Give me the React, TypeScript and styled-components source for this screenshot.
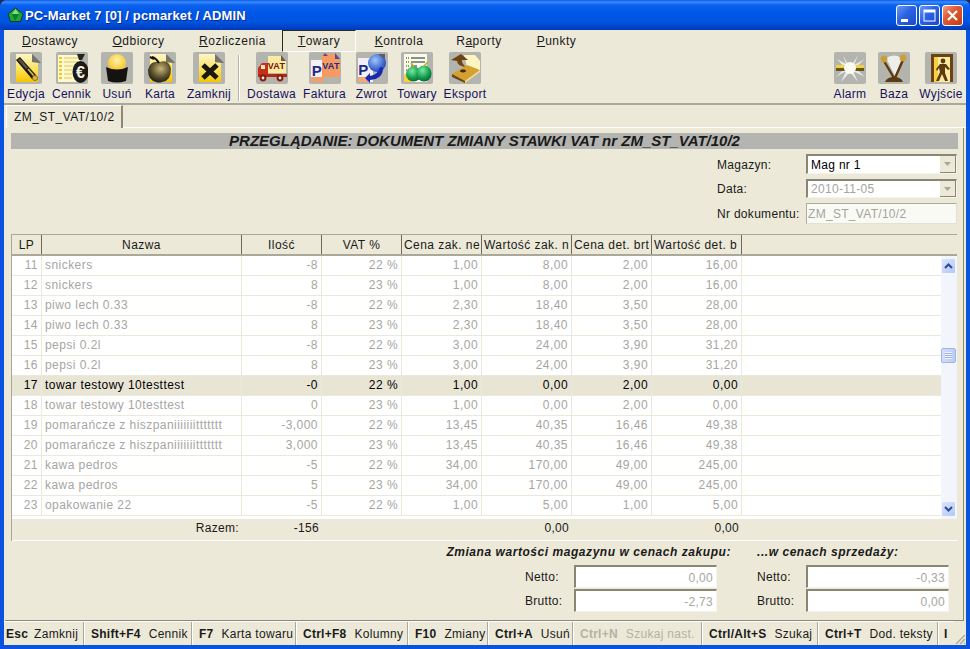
import React from "react";
import styled, { createGlobalStyle } from "styled-components";

const GlobalStyle = createGlobalStyle`
  html, body {
    margin: 0;
    padding: 0;
    background: #1d2c52;
    overflow: hidden;
  }
`;

// --- ICONS ---

const PageFold = () => (
  <>
    <path d="M22 2 L31 11 L22 10 Z" fill="#55524c" />
    <path d="M22 2 L22 10 L31 11 Z" fill="#8a8a84" opacity="0.6" />
  </>
);

const YellowPage = ({ id }: { id: string }) => (
  <>
    <defs>
      <linearGradient id={id} x1="0" y1="0" x2="0" y2="1">
        <stop offset="0" stopColor="#fdf6c8" />
        <stop offset="0.55" stopColor="#fbe25e" />
        <stop offset="1" stopColor="#f6c400" />
      </linearGradient>
    </defs>
    <path d="M6 2 H22 L28 9 V30 H6 Z" fill={`url(#${id})`} />
    <PageFold />
  </>
);

const EditIcon = () => (
  <svg width="32" height="32" viewBox="0 0 32 32">
    <YellowPage id="pageEdit" />
    <path d="M6 8 L10 5 L26 23 L22 27 Z" fill="#1b1a16" />
    <path d="M8 8 L10 6.5 L18 15.5 L16 17 Z" fill="#5a5648" />
    <path d="M18 17 L24 24" stroke="#d8b240" strokeWidth="1.8" />
    <circle cx="25" cy="26" r="2.6" fill="#d9b24a" stroke="#5a4a18" strokeWidth="0.6" />
  </svg>
);

const PriceIcon = () => (
  <svg width="32" height="32" viewBox="0 0 32 32">
    <rect x="2" y="3" width="22" height="27" fill="#fdf8d0" />
    <path d="M3 6 H6 M3 10 H6 M3 14 H6 M3 18 H6 M3 22 H6 M3 26 H6" stroke="#f2c81e" strokeWidth="2" />
    <path d="M8 6 H22 M8 10 H22 M8 14 H18 M8 18 H16 M8 22 H16 M8 26 H16" stroke="#e9d777" strokeWidth="1.5" />
    <path d="M21 2 L29 2 L26 8 L23 8 Z" fill="#26241e" />
    <ellipse cx="24.5" cy="20" rx="8" ry="11" fill="#1b1a16" />
    <text x="24.5" y="26" fontSize="16" fontWeight="700" textAnchor="middle" fill="#f3f0e6" fontFamily="Liberation Sans, sans-serif">€</text>
  </svg>
);

const BucketIcon = () => (
  <svg width="32" height="32" viewBox="0 0 32 32">
    <defs>
      <radialGradient id="bucketFill" cx="0.5" cy="0.35" r="0.6">
        <stop offset="0" stopColor="#fff3a6" />
        <stop offset="1" stopColor="#f4c326" />
      </radialGradient>
    </defs>
    <ellipse cx="16" cy="11" rx="9" ry="9" fill="url(#bucketFill)" />
    <path d="M5 15 Q16 20 27 15 L25 29 Q16 32 7 29 Z" fill="#141310" />
  </svg>
);

const AppleIcon = () => (
  <svg width="32" height="32" viewBox="0 0 32 32">
    <defs>
      <radialGradient id="appleBody" cx="0.55" cy="0.35" r="0.7">
        <stop offset="0" stopColor="#c9b67a" />
        <stop offset="0.55" stopColor="#5e5530" />
        <stop offset="1" stopColor="#16140c" />
      </radialGradient>
    </defs>
    <YellowPage id="pageApple" />
    <path d="M16 10 Q25 7 27 17 Q27 29 18 30 Q15 31 12 30 Q4 28 4 18 Q6 8 16 10 Z" fill="url(#appleBody)" />
    <path d="M15 11 Q12 6 8 5 M10 7 L6 5" stroke="#15140f" strokeWidth="2" fill="none" />
  </svg>
);

const CloseDocIcon = () => (
  <svg width="32" height="32" viewBox="0 0 32 32">
    <YellowPage id="pageClose" />
    <path d="M10 13 L24 26 M24 13 L10 26" stroke="#191812" strokeWidth="5" />
  </svg>
);

const TruckIcon = () => (
  <svg width="32" height="32" viewBox="0 0 32 32">
    <path d="M12 4 H25 L30 9 V21 H12 Z" fill="#fbeaa0" />
    <path d="M25 3 L30 9 H25 Z" fill="#6a5e50" />
    <text x="20.5" y="17" fontSize="9" fontWeight="700" textAnchor="middle" fill="#7a1408" fontFamily="Liberation Sans, sans-serif">VAT</text>
    <path d="M2 16 L6 11 H12 V24 H2 Z" fill="#c3301c" />
    <rect x="5" y="13" width="4" height="4" fill="#f6e6b8" />
    <rect x="2" y="22" width="29" height="3" fill="#b22a14" />
    <circle cx="7" cy="26" r="3.4" fill="#8a1c0c" />
    <circle cx="7" cy="26" r="1.4" fill="#f8f4e4" />
    <circle cx="24" cy="26" r="3.4" fill="#8a1c0c" />
    <circle cx="24" cy="26" r="1.4" fill="#f8f4e4" />
  </svg>
);

const InvoiceIcon = () => (
  <svg width="32" height="32" viewBox="0 0 32 32">
    <rect x="2" y="8" width="13" height="22" fill="#f4f0f4" />
    <rect x="2" y="25" width="13" height="5" fill="#f0a070" />
    <text x="8" y="24" fontSize="15" fontWeight="700" textAnchor="middle" fill="#1c2a88" fontFamily="Liberation Sans, sans-serif">P</text>
    <path d="M13 2 H26 L31 7 V25 H13 Z" fill="#f69a62" />
    <path d="M16 1 L19 4 H14 Z M26 1 L31 7 H26 Z" fill="#5a4a8a" />
    <text x="22" y="17" fontSize="9" fontWeight="700" textAnchor="middle" fill="#1c2a88" fontFamily="Liberation Sans, sans-serif">VAT</text>
  </svg>
);

const ReturnIcon = () => (
  <svg width="32" height="32" viewBox="0 0 32 32">
    <defs>
      <radialGradient id="globeFill" cx="0.4" cy="0.35" r="0.7">
        <stop offset="0" stopColor="#9cc8f8" />
        <stop offset="1" stopColor="#1a3cc0" />
      </radialGradient>
    </defs>
    <rect x="2" y="6" width="15" height="24" fill="#f2f0f6" />
    <rect x="2" y="25" width="10" height="5" fill="#f3a878" />
    <text x="7.5" y="23" fontSize="15" fontWeight="700" textAnchor="middle" fill="#1c2a88" fontFamily="Liberation Sans, sans-serif">P</text>
    <circle cx="21" cy="11" r="9" fill="url(#globeFill)" />
    <path d="M27 16 Q27 27 14 28 L14 31 L9 26 L14 21 L14 24 Q22 23 24 15 Z" fill="#1528b4" />
    <path d="M22 2 L29 2 L29 8 Z" fill="#5a5a70" />
  </svg>
);

const GoodsIcon = () => (
  <svg width="32" height="32" viewBox="0 0 32 32">
    <defs>
      <radialGradient id="greenApple" cx="0.4" cy="0.3" r="0.75">
        <stop offset="0" stopColor="#7de8a0" />
        <stop offset="0.6" stopColor="#14a050" />
        <stop offset="1" stopColor="#06602c" />
      </radialGradient>
    </defs>
    <rect x="3" y="2" width="23" height="28" fill="#fbf8ee" />
    <rect x="3" y="22" width="8" height="8" fill="#f6cf3c" />
    <path d="M5 6 H8 M5 10 H8 M5 14 H8 M5 18 H8" stroke="#8aa050" strokeWidth="2" strokeDasharray="1 1" />
    <path d="M10 6 H24 M10 10 H24 M10 14 H16" stroke="#607060" strokeWidth="1.6" />
    <ellipse cx="12.5" cy="22" rx="7.5" ry="7.5" fill="url(#greenApple)" />
    <ellipse cx="23" cy="21.5" rx="7.5" ry="8" fill="url(#greenApple)" />
    <path d="M23 14 L27 10 M13 15 L10 11" stroke="#b4b020" strokeWidth="1.6" />
  </svg>
);

const ExportIcon = () => (
  <svg width="32" height="32" viewBox="0 0 32 32">
    <path d="M15 3 H26 L31 9 V19 L18 15 Z" fill="#fdf4c4" />
    <path d="M12 2 L2 8 L8 9 Q8 14 17 15 Q12 11 13 8 L19 8 Z" fill="#6e4410" />
    <path d="M3 22 L18 13 L31 18 L16 29 Z" fill="#d4a030" />
    <path d="M3 22 L16 29 V31 L3 25 Z" fill="#6e4410" />
    <path d="M16 29 L31 18 V20 L16 31 Z" fill="#f4dc90" />
    <ellipse cx="14" cy="19" rx="3" ry="1.4" fill="#3c280a" />
  </svg>
);

const AlarmIcon = () => (
  <svg width="32" height="32" viewBox="0 0 32 32">
    <path d="M16 16 L24 3 L20 13 L31 7 L21 16 L31 25 L19 19 L24 30 L16 20 L7 30 L12 19 L2 25 L11 16 L3 7 L12 12 L9 3 Z" fill="#e8eaea" />
    <rect x="2" y="13" width="28" height="3" fill="#f0d24a" />
    <rect x="2" y="16" width="28" height="3" fill="#6a5414" />
    <circle cx="16" cy="16" r="6" fill="#fbfbf4" />
  </svg>
);

const LeverIcon = () => (
  <svg width="32" height="32" viewBox="0 0 32 32">
    <path d="M8 6 Q16 1 24 6 L17 24 Z" fill="#eeeeea" />
    <path d="M6 9 L16 26 M25 8 L17 26" stroke="#5e3a10" strokeWidth="2.4" />
    <circle cx="6" cy="7" r="3.4" fill="#c8a03a" />
    <circle cx="25" cy="6" r="3.4" fill="#c8a03a" />
    <path d="M7 30 Q9 25 16 25 Q23 25 25 30 Z" fill="#5e3a10" />
  </svg>
);

const ExitIcon = () => (
  <svg width="32" height="32" viewBox="0 0 32 32">
    <path d="M6 2 H28 V30 H25 V5 H9 V30 H6 Z" fill="#6b4216" />
    <rect x="9" y="5" width="16" height="25" fill="#fbeaa0" />
    <rect x="9" y="5" width="4" height="25" fill="#f6d040" />
    <circle cx="18" cy="9" r="2.4" fill="#5e3a10" />
    <path d="M15 12 H21 L25 17 L23 18 L20 15 L20 21 L23 29 H20 L17 22 L14 29 H11 L15 20 L14 16 L12 19 L11 17 Z" fill="#5e3a10" />
  </svg>
);

const AppLogo = () => (
  <svg width="17" height="16" viewBox="0 0 17 16">
    <path d="M8.5 1 L16 7 L13.5 14.5 H3.5 L1 7 Z" fill="#1fa63a" stroke="#0c3a18" strokeWidth="1" />
    <path d="M8.5 2 L5 7 H12 Z" fill="#7fe07a" />
    <path d="M5 7 L8 14 L12 7 Z" fill="#0f7a2c" />
  </svg>
);

const ArrowGlyph = () => (
  <svg width="7" height="4" viewBox="0 0 7 4">
    <path d="M0 0 H7 L3.5 4 Z" fill="#a8a498" />
  </svg>
);

// --- DATA ---

const COLS = [30, 200, 80, 80, 80, 90, 80, 90];

const HEADERS = [
  { text: "LP", align: "center" },
  { text: "Nazwa", align: "center" },
  { text: "Ilość", align: "center" },
  { text: "VAT %", align: "center" },
  { text: "Cena zak. ne", align: "left" },
  { text: "Wartość zak. n", align: "left" },
  { text: "Cena det. brt", align: "left" },
  { text: "Wartość det. b", align: "left" },
];

const ROWS = [
  ["11", "snickers", "-8", "22 %", "1,00", "8,00", "2,00", "16,00"],
  ["12", "snickers", "8", "23 %", "1,00", "8,00", "2,00", "16,00"],
  ["13", "piwo lech 0.33", "-8", "22 %", "2,30", "18,40", "3,50", "28,00"],
  ["14", "piwo lech 0.33", "8", "23 %", "2,30", "18,40", "3,50", "28,00"],
  ["15", "pepsi 0.2l", "-8", "22 %", "3,00", "24,00", "3,90", "31,20"],
  ["16", "pepsi 0.2l", "8", "23 %", "3,00", "24,00", "3,90", "31,20"],
  ["17", "towar testowy 10testtest", "-0", "22 %", "1,00", "0,00", "2,00", "0,00"],
  ["18", "towar testowy 10testtest", "0", "23 %", "1,00", "0,00", "2,00", "0,00"],
  ["19", "pomarańcze z hiszpaniiiiiiittttttt", "-3,000", "22 %", "13,45", "40,35", "16,46", "49,38"],
  ["20", "pomarańcze z hiszpaniiiiiiittttttt", "3,000", "23 %", "13,45", "40,35", "16,46", "49,38"],
  ["21", "kawa pedros", "-5", "22 %", "34,00", "170,00", "49,00", "245,00"],
  ["22", "kawa pedros", "5", "23 %", "34,00", "170,00", "49,00", "245,00"],
  ["23", "opakowanie 22", "-5", "22 %", "1,00", "5,00", "1,00", "5,00"],
];

const FOOTER = ["", "Razem:", "-156", "", "", "0,00", "", "0,00"];

const MENU = [
  { key: "D", rest: "ostawcy", width: 92 },
  { key: "O", rest: "dbiorcy", width: 85 },
  { key: "R", rest: "ozliczenia", width: 103 },
  { key: "T", rest: "owary", width: 72, active: true },
  { key: "K", rest: "ontrola", width: 86 },
  { pre: "R", key: "a", rest: "porty", width: 74 },
  { key: "P", rest: "unkty", width: 81 },
];

const TOOLS_LEFT = [
  { label: "Edycja", width: 40, icon: <EditIcon /> },
  { label: "Cennik", width: 51, icon: <PriceIcon /> },
  { label: "Usuń", width: 40, icon: <BucketIcon /> },
  { label: "Karta", width: 46, icon: <AppleIcon /> },
  { label: "Zamknij", width: 52, icon: <CloseDocIcon /> },
];

const TOOLS_MIDDLE = [
  { label: "Dostawa", width: 57, icon: <TruckIcon /> },
  { label: "Faktura", width: 49, icon: <InvoiceIcon /> },
  { label: "Zwrot", width: 45, icon: <ReturnIcon /> },
  { label: "Towary", width: 46, icon: <GoodsIcon /> },
  { label: "Eksport", width: 50, icon: <ExportIcon /> },
];

const TOOLS_RIGHT = [
  { label: "Alarm", width: 40, icon: <AlarmIcon /> },
  { label: "Baza", width: 48, icon: <LeverIcon /> },
  { label: "Wyjście", width: 46, icon: <ExitIcon /> },
];

const SHORTCUTS = [
  { key: "Esc", text: "Zamknij", width: 81 },
  { key: "Shift+F4", text: "Cennik", width: 108 },
  { key: "F7", text: "Karta towaru", width: 104 },
  { key: "Ctrl+F8", text: "Kolumny", width: 112 },
  { key: "F10", text: "Zmiany", width: 80 },
  { key: "Ctrl+A", text: "Usuń", width: 85 },
  { key: "Ctrl+N", text: "Szukaj nast.", width: 129, disabled: true },
  { key: "Ctrl/Alt+S", text: "Szukaj", width: 116 },
  { key: "Ctrl+T", text: "Dod. teksty", width: 120 },
];

// --- RENDER ---

const renderTool = (tool: { label: string; width: number; icon: React.ReactNode }) => (
  <ToolButton key={tool.label} $width={tool.width}>
    <IconTile>{tool.icon}</IconTile>
    <ToolLabel>{tool.label}</ToolLabel>
  </ToolButton>
);

const App = () => (
  <Window>
    <GlobalStyle />

    <TitleBar>
      <AppLogo />
      <TitleText>PC-Market 7 [0] / pcmarket / ADMIN</TitleText>
      <CaptionButtons>
        <CaptionButton>
          <svg width="21" height="21" viewBox="0 0 21 21">
            <rect x="5" y="14" width="7" height="3" fill="#fff" />
          </svg>
        </CaptionButton>
        <CaptionButton>
          <svg width="21" height="21" viewBox="0 0 21 21">
            <rect x="5" y="5" width="11" height="11" fill="none" stroke="#fff" strokeWidth="1" />
            <rect x="5" y="5" width="11" height="2.5" fill="#fff" />
          </svg>
        </CaptionButton>
        <CaptionButton $close>
          <svg width="21" height="21" viewBox="0 0 21 21">
            <path d="M6 6 L15 15 M15 6 L6 15" stroke="#fff" strokeWidth="2.2" />
          </svg>
        </CaptionButton>
      </CaptionButtons>
    </TitleBar>

    <Body>
      <MenuBar>
        {MENU.map(({ pre, key, rest, width, active }) => (
          <MenuTab key={rest} $width={width} $active={active}>
            {pre}
            <u>{key}</u>
            {rest}
          </MenuTab>
        ))}
      </MenuBar>

      <Toolbar>
        {TOOLS_LEFT.map(renderTool)}
        <ToolSeparator />
        {TOOLS_MIDDLE.map(renderTool)}
        <ToolSpacer />
        {TOOLS_RIGHT.map(renderTool)}
      </Toolbar>

      <TabStrip>
        <DocTab>ZM_ST_VAT/10/2</DocTab>
        <TabStripLine />
      </TabStrip>

      <Panel>
        <HeaderBar>PRZEGLĄDANIE: DOKUMENT ZMIANY STAWKI VAT nr ZM_ST_VAT/10/2</HeaderBar>

        <DocForm>
          <FormLabel>Magazyn:</FormLabel>
          <ComboBox>
            Mag nr 1
            <ComboArrow>
              <ArrowGlyph />
            </ComboArrow>
          </ComboBox>
          <FormLabel>Data:</FormLabel>
          <ComboBox $disabled>
            2010-11-05
            <ComboArrow>
              <ArrowGlyph />
            </ComboArrow>
          </ComboBox>
          <FormLabel>Nr dokumentu:</FormLabel>
          <TextBox>ZM_ST_VAT/10/2</TextBox>
        </DocForm>

        <Grid>
          <GridHead>
            {HEADERS.map(({ text, align }, i) => (
              <HeadCell key={text} $width={COLS[i]} $align={align}>
                {text}
              </HeadCell>
            ))}
          </GridHead>

          <GridBody>
            <GridRows>
              {ROWS.map((row) => (
                <GridRow key={row[0]} $current={row[0] === "17"}>
                  {row.map((value, i) => (
                    <GridCell key={i} $width={COLS[i]} $left={i === 1}>
                      {value}
                    </GridCell>
                  ))}
                </GridRow>
              ))}
            </GridRows>

            <ScrollBar>
              <ScrollButton>
                <svg width="9" height="6" viewBox="0 0 9 6">
                  <path d="M1 5 L4.5 1.5 L8 5" fill="none" stroke="#2a4a9a" strokeWidth="2" />
                </svg>
              </ScrollButton>
              <ScrollThumb />
              <ScrollButton>
                <svg width="9" height="6" viewBox="0 0 9 6">
                  <path d="M1 1 L4.5 4.5 L8 1" fill="none" stroke="#2a4a9a" strokeWidth="2" />
                </svg>
              </ScrollButton>
            </ScrollBar>
          </GridBody>

          <GridFooter>
            {FOOTER.map((value, i) => (
              <FooterCell key={i} $width={COLS[i]}>
                {value}
              </FooterCell>
            ))}
          </GridFooter>
        </Grid>

        <Summary>
          <SummaryGroup $width={286}>
            <SummaryTitle $right>Zmiana wartości magazynu w cenach zakupu:</SummaryTitle>
            <SummaryRow $indent={80}>
              <SummaryLabel>Netto:</SummaryLabel>
              <AmountBox>0,00</AmountBox>
            </SummaryRow>
            <SummaryRow $indent={80}>
              <SummaryLabel>Brutto:</SummaryLabel>
              <AmountBox>-2,73</AmountBox>
            </SummaryRow>
          </SummaryGroup>

          <SummaryGroup $width={192}>
            <SummaryTitle>...w cenach sprzedaży:</SummaryTitle>
            <SummaryRow>
              <SummaryLabel>Netto:</SummaryLabel>
              <AmountBox>-0,33</AmountBox>
            </SummaryRow>
            <SummaryRow>
              <SummaryLabel>Brutto:</SummaryLabel>
              <AmountBox>0,00</AmountBox>
            </SummaryRow>
          </SummaryGroup>
        </Summary>
      </Panel>

      <StatusBar>
        {SHORTCUTS.map(({ key, text, width, disabled }) => (
          <StatusCell key={key} $width={width} $disabled={disabled}>
            <b>{key}</b>
            {text}
          </StatusCell>
        ))}
        <StatusEnd>
          <b>I</b>
        </StatusEnd>
        <ResizeGrip>
          <svg width="12" height="12" viewBox="0 0 12 12">
            <path d="M11 2 L2 11 M11 6 L6 11 M11 10 L10 11" stroke="#aca899" strokeWidth="1.4" />
          </svg>
        </ResizeGrip>
      </StatusBar>
    </Body>
  </Window>
);

export default App;

const Window = styled.div`
  background: #0a52e0;
  border-radius: 7px 7px 0 0;
  box-sizing: border-box;
  color: #1a1a1a;
  display: flex;
  flex-direction: column;
  font-family: "Liberation Sans", Arial, sans-serif;
  font-size: 12px;
  height: 649px;
  letter-spacing: 0.3px;
  overflow: hidden;
  width: 970px;
`;

const TitleBar = styled.div`
  align-items: center;
  background: linear-gradient(
    180deg,
    #0a58e8 0,
    #3a8cff 2px,
    #0c62f0 5px,
    #0058e8 12px,
    #0054e0 22px,
    #0040c4 28px,
    #0038b4 30px
  );
  display: flex;
  flex: none;
  height: 30px;
  padding: 0 7px 0 7px;
`;

const TitleText = styled.div`
  color: #fff;
  font-size: 13px;
  font-weight: 700;
  letter-spacing: 0.13px;
  margin-left: 1px;
  text-shadow: 1px 1px 0 #0a2a90;
  white-space: nowrap;
`;

const CaptionButtons = styled.div`
  display: flex;
  gap: 2px;
  margin-left: auto;
`;

const CaptionButton = styled.div<{ $close?: boolean }>`
  background: ${({ $close }) =>
    $close
      ? "linear-gradient(135deg, #f0a088 0, #e05a32 40%, #c43c14 100%)"
      : "linear-gradient(135deg, #6c98f4 0, #2a62e4 45%, #1c48cc 100%)"};
  border: 1px solid #fff;
  border-radius: 3px;
  box-sizing: border-box;
  display: flex;
  height: 21px;
  overflow: hidden;
  width: 21px;

  svg {
    flex: none;
    margin: -1px;
  }
`;

const Body = styled.div`
  background: #ece9d8;
  display: flex;
  flex: 1;
  flex-direction: column;
  margin: 0 4px 4px;
  min-height: 0;
`;

const MenuBar = styled.div`
  display: flex;
  flex: none;
  height: 22px;
  letter-spacing: 0.5px;
`;

const MenuTab = styled.div<{ $width: number; $active?: boolean }>`
  align-items: center;
  border-bottom: 1px solid ${({ $active }) => ($active ? "#fff" : "transparent")};
  border-left: 1px solid ${({ $active }) => ($active ? "#2a2a24" : "transparent")};
  border-right: 1px solid ${({ $active }) => ($active ? "#fff" : "transparent")};
  border-top: 1px solid ${({ $active }) => ($active ? "#2a2a24" : "transparent")};
  box-sizing: border-box;
  display: flex;
  justify-content: center;
  margin-left: ${({ $active }) => ($active ? "-2px" : "0")};
  padding-bottom: 1px;
  width: ${({ $active, $width }) => ($active ? $width + 2 : $width)}px;
`;

const Toolbar = styled.div`
  align-items: flex-start;
  border-bottom: 2px solid #aca899;
  display: flex;
  flex: none;
  height: 51px;
  padding: 0 2px;
`;

const ToolButton = styled.div<{ $width: number }>`
  align-items: center;
  display: flex;
  flex: none;
  flex-direction: column;
  white-space: nowrap;
  width: ${({ $width }) => $width}px;
`;

const IconTile = styled.div`
  background: #b4b4ae;
  border-radius: 2px;
  display: flex;
  height: 32px;
  overflow: hidden;
  width: 32px;
`;

const ToolLabel = styled.div`
  color: #15105e;
  line-height: 14px;
  margin-top: 3px;
`;

const ToolSeparator = styled.div`
  background: #b8b4a2;
  border-right: 1px solid #fff;
  flex: none;
  height: 46px;
  margin: 3px 3px 0 3px;
  width: 1px;
`;

const ToolSpacer = styled.div`
  flex: 1;
`;

const TabStrip = styled.div`
  display: flex;
  flex: none;
  height: 23px;
`;

const DocTab = styled.div`
  align-items: center;
  border-left: 1px solid #fff;
  border-right: 2px solid #8c8874;
  border-top: 1px solid #fff;
  box-sizing: border-box;
  display: flex;
  letter-spacing: 0.45px;
  margin-left: 2px;
  padding-left: 7px;
  white-space: nowrap;
  width: 117px;
`;

const TabStripLine = styled.div`
  align-self: flex-end;
  background: #fff;
  flex: 1;
  height: 1px;
`;

const Panel = styled.div`
  border-bottom: 1px solid #8c8874;
  border-right: 1px solid #8c8874;
  display: flex;
  flex: 1;
  flex-direction: column;
  margin: 0 2px 0 1px;
  min-height: 0;
  padding: 5px 6px 0;
`;

const HeaderBar = styled.div`
  background: #b4b4b0;
  flex: none;
  font-size: 15px;
  font-style: italic;
  font-weight: 700;
  height: 16px;
  letter-spacing: 0;
  line-height: 16px;
  margin-right: -1px;
  text-align: center;
`;

const DocForm = styled.div`
  align-self: flex-end;
  display: grid;
  flex: none;
  gap: 5px 0;
  grid-template-columns: 89px 151px;
  grid-template-rows: 20px 19px 21px;
  margin-top: 5px;
`;

const FormLabel = styled.div`
  align-self: center;
  padding-top: 1px;
  white-space: nowrap;
`;

const sunken = `
  border-bottom: 1px solid #f6f4ea;
  border-left: 2px solid #8a8674;
  border-right: 1px solid #f6f4ea;
  border-top: 2px solid #8a8674;
  box-sizing: border-box;
`;

const ComboBox = styled.div<{ $disabled?: boolean }>`
  ${sunken}
  align-items: center;
  background: #fff;
  color: ${({ $disabled }) => ($disabled ? "#a4a4a0" : "#000")};
  display: flex;
  justify-content: space-between;
  padding-left: 3px;
`;

const ComboArrow = styled.div`
  align-items: center;
  align-self: stretch;
  background: #ece9d8;
  border-bottom: 1px solid #8a8674;
  border-right: 1px solid #8a8674;
  display: flex;
  justify-content: center;
  width: 15px;
`;

const TextBox = styled.div`
  align-items: center;
  background: #fafaf5;
  border: 1px solid #e4e1d2;
  border-left: 1px solid #b0ac9c;
  border-top: 1px solid #b0ac9c;
  box-sizing: border-box;
  color: #a4a4a0;
  display: flex;
  padding-left: 1px;
  white-space: nowrap;
`;

const Grid = styled.div`
  border-left: 1px solid #aca899;
  border-top: 1px solid #aca899;
  display: flex;
  flex: none;
  flex-direction: column;
  letter-spacing: 0.45px;
  margin-top: 10px;
`;

const GridHead = styled.div`
  border-bottom: 2px solid #aca899;
  display: flex;
  height: 19px;
`;

const HeadCell = styled.div<{ $width: number; $align: string }>`
  border-right: 1px solid #6e6a5a;
  box-sizing: border-box;
  flex: none;
  line-height: 21px;
  overflow: hidden;
  padding: 0 2px;
  text-align: ${({ $align }) => $align};
  white-space: nowrap;
  width: ${({ $width }) => $width}px;
`;

const GridBody = styled.div`
  background: #fff;
  display: flex;
  height: 263px;
`;

const GridRows = styled.div`
  flex: 1;
`;

const GridRow = styled.div<{ $current?: boolean }>`
  background: ${({ $current }) => ($current ? "#e9e5d5" : "#fff")};
  border-bottom: 1px solid #ebe8dc;
  box-sizing: border-box;
  color: ${({ $current }) => ($current ? "#000" : "#a6a6a2")};
  display: flex;
  height: 20px;
`;

const GridCell = styled.div<{ $width: number; $left?: boolean }>`
  border-right: 1px solid #ebe8dc;
  box-sizing: border-box;
  flex: none;
  line-height: 19px;
  overflow: hidden;
  padding: ${({ $left }) => ($left ? "0 0 0 3px" : "0 3px 0 0")};
  text-align: ${({ $left }) => ($left ? "left" : "right")};
  white-space: nowrap;
  width: ${({ $width }) => $width}px;
`;

const ScrollBar = styled.div`
  background: #f2f5fb;
  display: flex;
  flex: none;
  flex-direction: column;
  justify-content: space-between;
  padding: 2px 0 2px;
  position: relative;
  width: 16px;
`;

const ScrollButton = styled.div`
  align-items: center;
  background: linear-gradient(135deg, #dbe5fc, #b4c8f4);
  border: 1px solid #f4f7fd;
  border-radius: 2px;
  box-sizing: border-box;
  display: flex;
  height: 16px;
  justify-content: center;
  width: 15px;
`;

const ScrollThumb = styled.div`
  background:
    repeating-linear-gradient(180deg, #eef3fe 0 1px, #9cb4e8 1px 2px) center / 7px 7px no-repeat,
    linear-gradient(90deg, #d4e0fa, #b8ccf6);
  border: 1px solid #a0b4e8;
  border-radius: 2px;
  box-sizing: border-box;
  height: 15px;
  left: 0;
  position: absolute;
  top: 92px;
  width: 15px;
`;

const GridFooter = styled.div`
  border-bottom: 1px solid #fff;
  display: flex;
  height: 21px;
  letter-spacing: 0.3px;
`;

const FooterCell = styled.div<{ $width: number }>`
  box-sizing: border-box;
  flex: none;
  line-height: 19px;
  padding-right: 3px;
  text-align: right;
  width: ${({ $width }) => $width}px;
`;

const Summary = styled.div`
  display: flex;
  flex: none;
  gap: 26px;
  justify-content: flex-end;
  margin-top: 3px;
  padding-right: 8px;
`;

const SummaryGroup = styled.div<{ $width: number }>`
  display: flex;
  flex-direction: column;
  gap: 1px;
  width: ${({ $width }) => $width}px;
`;

const SummaryTitle = styled.div<{ $right?: boolean }>`
  font-style: italic;
  font-weight: 700;
  height: 18px;
  letter-spacing: 0.55px;
  line-height: 16px;
  margin-bottom: 2px;
  text-align: ${({ $right }) => ($right ? "right" : "left")};
  white-space: nowrap;
`;

const SummaryRow = styled.div<{ $indent?: number }>`
  display: flex;
  height: 23px;
  margin-left: ${({ $indent }) => $indent ?? 0}px;
  width: 192px;
`;

const SummaryLabel = styled.div`
  flex: none;
  line-height: 24px;
  width: 49px;
`;

const AmountBox = styled.div`
  ${sunken}
  background: #fff;
  color: #a6a6a2;
  flex: none;
  height: 23px;
  line-height: 22px;
  padding-right: 3px;
  text-align: right;
  width: 143px;
`;

const StatusBar = styled.div`
  align-items: stretch;
  display: flex;
  flex: none;
  height: 24px;
  white-space: nowrap;
`;

const StatusCell = styled.div<{ $width: number; $disabled?: boolean }>`
  align-items: center;
  border-right: 1px solid #fff;
  border-top: 1px solid #fff;
  box-shadow: inset -1px 0 0 #aca899;
  box-sizing: border-box;
  color: ${({ $disabled }) => ($disabled ? "#b4b2a6" : "#1a1a1a")};
  display: flex;
  flex: none;
  gap: 8px;
  padding-left: 6px;
  width: ${({ $width }) => $width}px;

  &:first-child {
    gap: 6px;
    padding-left: 2px;
  }

  b {
    letter-spacing: 0.25px;
  }
`;

const StatusEnd = styled.div`
  align-items: center;
  border-top: 1px solid #fff;
  display: flex;
  flex: 1;
  padding-left: 5px;
`;

const ResizeGrip = styled.div`
  align-self: flex-end;
  display: flex;
`;
